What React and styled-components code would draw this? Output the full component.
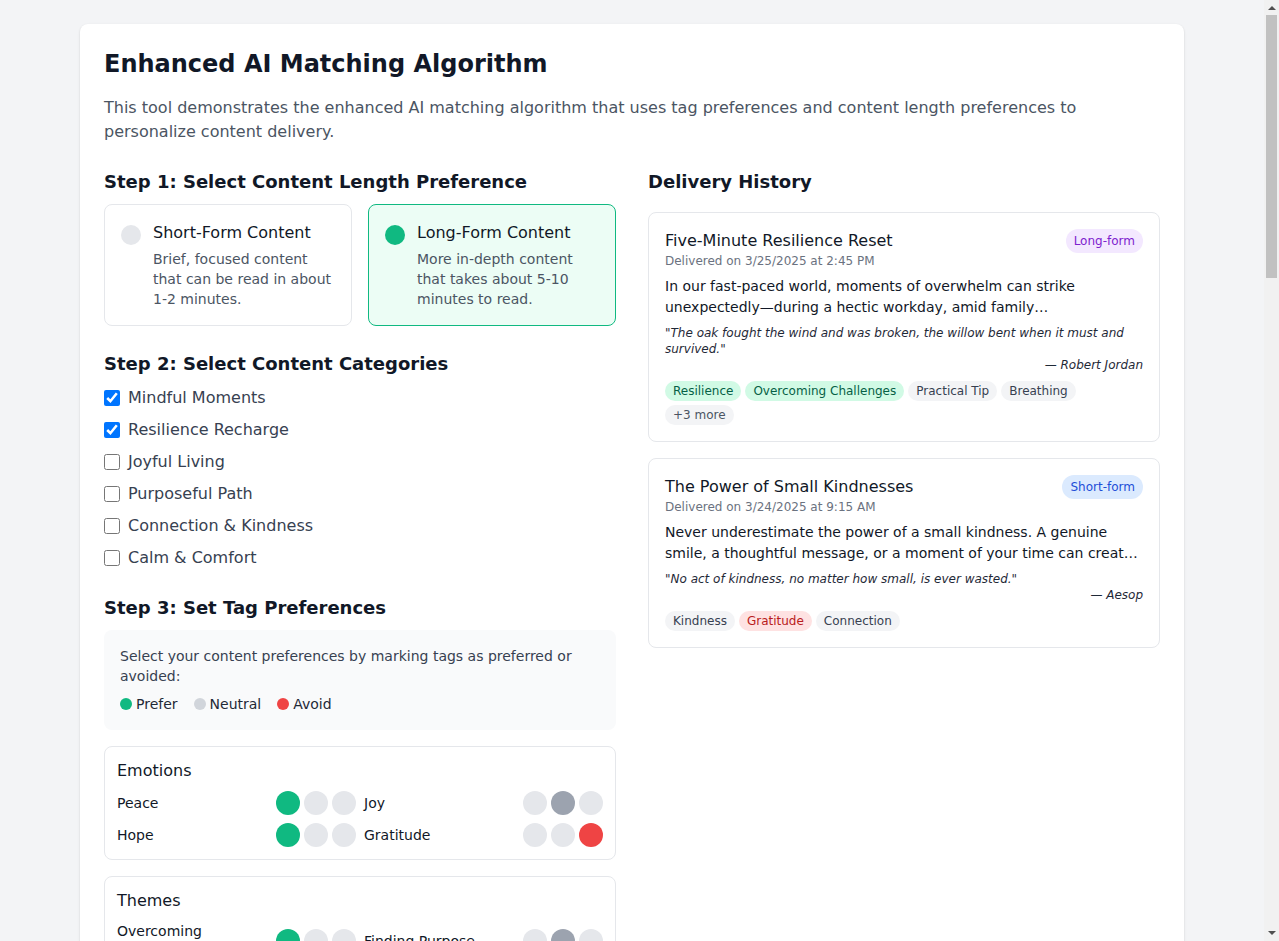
import React, { useState } from "react";
import styled, { createGlobalStyle } from "styled-components";

const GlobalStyle = createGlobalStyle`
  html, body { margin: 0; padding: 0; }
  body {
    background: #f3f4f6;
    font-family: "DejaVu Sans", "Noto Sans", sans-serif;
    color: #111827;
    padding-right: 15px;
  }
  * { box-sizing: border-box; }
`;

const ScrollRail = styled.div`
  position: fixed;
  top: 0;
  right: 0;
  width: 15px;
  height: 100vh;
  background: #f1f1f1;
  display: flex;
  flex-direction: column;
  justify-content: space-between;
  align-items: center;
`;

const RailTop = styled.div`
  display: flex;
  flex-direction: column;
  align-items: center;
`;

const RailArrow = styled.div`
  height: 15px;
  width: 15px;
  display: flex;
  align-items: center;
  justify-content: center;
`;

const RailThumb = styled.div`
  width: 11px;
  height: 263px;
  background: #c1c1c1;
`;

const Page = styled.div`
  max-width: 1152px;
  margin: 0 auto;
  padding: 24px;
`;

const Panel = styled.div`
  background: #fff;
  border-radius: 8px;
  box-shadow: 0 1px 3px rgba(0,0,0,0.1), 0 1px 2px rgba(0,0,0,0.06);
  padding: 24px;
`;

const Title = styled.h1`
  font-size: 24px;
  line-height: 32px;
  font-weight: 700;
  margin: 0 0 16px;
  color: #111827;
`;

const Intro = styled.p`
  font-size: 16px;
  line-height: 24px;
  color: #4b5563;
  margin: 0 0 24px;
`;

const Columns = styled.div`
  display: grid;
  grid-template-columns: 1fr 1fr;
  gap: 32px;
  align-items: start;
`;

const Section = styled.section`
  margin-bottom: 24px;
`;

const StepHeading = styled.h2`
  font-size: 18px;
  line-height: 28px;
  font-weight: 600;
  margin: 0 0 ${p => (p.$mb ? p.$mb : 8)}px;
  color: #111827;
`;

const OptionGrid = styled.div`
  display: grid;
  grid-template-columns: 1fr 1fr;
  gap: 16px;
`;

const OptionCard = styled.div`
  display: flex;
  align-items: flex-start;
  border: 1px solid ${p => (p.$active ? "#10b981" : "#e5e7eb")};
  background: ${p => (p.$active ? "#ecfdf5" : "#fff")};
  border-radius: 8px;
  padding: 16px;
  cursor: pointer;
`;

const Radio = styled.span`
  flex: none;
  width: 20px;
  height: 20px;
  border-radius: 50%;
  margin-top: 4px;
  margin-right: 12px;
  background: ${p => (p.$active ? "#10b981" : "#e5e7eb")};
`;

const OptionTitle = styled.div`
  font-size: 16px;
  line-height: 24px;
  font-weight: 500;
  color: #111827;
`;

const OptionDesc = styled.div`
  font-size: 14px;
  line-height: 20px;
  color: #4b5563;
  margin-top: 4px;
`;

const CheckList = styled.div`
  display: flex;
  flex-direction: column;
  gap: 8px;
`;

const CheckRow = styled.label`
  display: flex;
  align-items: center;
  font-size: 16px;
  line-height: 24px;
  color: #374151;
  cursor: pointer;
`;

const CheckBox = styled.input`
  width: 16px;
  height: 16px;
  margin: 0 8px 0 0;
`;

const InfoBox = styled.div`
  background: #f9fafb;
  border-radius: 8px;
  padding: 16px;
  margin-bottom: 16px;
`;

const InfoText = styled.p`
  font-size: 14px;
  line-height: 20px;
  color: #374151;
  margin: 0;
`;

const Legend = styled.div`
  display: flex;
  gap: 16px;
  margin-top: 8px;
  font-size: 14px;
  line-height: 20px;
  color: #1f2937;
`;

const LegendItem = styled.span`
  display: flex;
  align-items: center;
  gap: 4px;
`;

const Dot = styled.span`
  width: 12px;
  height: 12px;
  border-radius: 50%;
  background: ${p => p.$color};
`;

const TagGroup = styled.div`
  border: 1px solid #e5e7eb;
  border-radius: 8px;
  padding: 12px;
  margin-bottom: 16px;
`;

const GroupTitle = styled.div`
  font-size: 16px;
  line-height: 24px;
  font-weight: 500;
  margin-bottom: 8px;
  color: #111827;
`;

const TagGrid = styled.div`
  display: grid;
  grid-template-columns: 1fr 1fr;
  gap: 8px;
`;

const TagRow = styled.div`
  display: flex;
  align-items: center;
  justify-content: space-between;
  min-height: 24px;
`;

const TagName = styled.span`
  font-size: 14px;
  line-height: 20px;
  color: #111827;
  padding-right: 8px;
`;

const Toggles = styled.div`
  display: flex;
  gap: 4px;
  flex: none;
`;

const ToggleBtn = styled.button`
  width: 24px;
  height: 24px;
  border-radius: 50%;
  border: none;
  padding: 0;
  cursor: pointer;
  background: ${p => p.$bg};
`;

const PrimaryButton = styled.button`
  width: 100%;
  padding: 12px 16px;
  border: none;
  border-radius: 8px;
  background: #2563eb;
  color: #fff;
  font-family: inherit;
  font-size: 16px;
  line-height: 24px;
  font-weight: 500;
  cursor: pointer;
  margin-bottom: 24px;
`;

const HistoryCard = styled.div`
  border: 1px solid #e5e7eb;
  border-radius: 8px;
  padding: 16px;
  margin-bottom: 16px;
`;

const CardHead = styled.div`
  display: flex;
  justify-content: space-between;
  align-items: flex-start;
  margin-bottom: 7px;
`;

const CardTitle = styled.div`
  font-size: 16px;
  line-height: 24px;
  font-weight: 500;
  color: #111827;
`;

const CardDate = styled.div`
  font-size: 12px;
  line-height: 16px;
  color: #6b7280;
`;

const Badge = styled.span`
  flex: none;
  font-size: 12px;
  line-height: 16px;
  padding: 4px 8px;
  border-radius: 9999px;
  background: ${p => (p.$long ? "#f3e8ff" : "#dbeafe")};
  color: ${p => (p.$long ? "#7e22ce" : "#1d4ed8")};
`;

const Excerpt = styled.p`
  font-size: 14px;
  line-height: 21px;
  color: #111827;
  margin: 0 0 7px;
  display: -webkit-box;
  -webkit-line-clamp: 2;
  -webkit-box-orient: vertical;
  overflow: hidden;
`;

const Quote = styled.p`
  font-size: 12px;
  line-height: 16px;
  font-style: italic;
  color: #1f2937;
  margin: 0;
`;

const Author = styled.p`
  font-size: 12px;
  line-height: 16px;
  font-style: italic;
  color: #1f2937;
  text-align: right;
  margin: 0 0 8px;
`;

const Pills = styled.div`
  display: flex;
  flex-wrap: wrap;
  gap: 4px;
`;

const tone = {
  prefer: ["#d1fae5", "#065f46"],
  avoid: ["#fee2e2", "#b91c1c"],
  neutral: ["#f3f4f6", "#374151"],
  more: ["#f3f4f6", "#4b5563"],
};

const Pill = styled.span`
  font-size: 12px;
  line-height: 16px;
  padding: 2px 8px;
  border-radius: 9999px;
  background: ${p => tone[p.$tone][0]};
  color: ${p => tone[p.$tone][1]};
`;

const ResultCard = styled.div`
  border: 1px solid #e5e7eb;
  border-radius: 8px;
  padding: 16px;
  margin-bottom: 16px;
`;

const ScoreRow = styled.div`
  display: flex;
  align-items: center;
  gap: 8px;
  margin: 8px 0;
  font-size: 12px;
  line-height: 16px;
  color: #4b5563;
`;

const ScoreTrack = styled.div`
  flex: 1;
  height: 8px;
  border-radius: 9999px;
  background: #e5e7eb;
  overflow: hidden;
`;

const ScoreFill = styled.div`
  height: 100%;
  background: #10b981;
  border-radius: 9999px;
`;

const Breakdown = styled.ul`
  margin: 8px 0 0;
  padding-left: 18px;
  font-size: 12px;
  line-height: 18px;
  color: #4b5563;
`;

const tagGroups = [
  {
    name: "Emotions",
    tags: [["Peace", 0], ["Joy", 1], ["Hope", 0], ["Gratitude", 2]],
  },
  {
    name: "Themes",
    tags: [
      ["Overcoming Challenges", 0], ["Finding Purpose", 1],
      ["Resilience", 0], ["Self-Compassion", 1],
      ["Relationships", 1], ["Personal Growth", 0],
    ],
  },
  {
    name: "Practices",
    tags: [
      ["Breathing", 1], ["Meditation", 0],
      ["Journaling", 1], ["Movement", 2],
      ["Practical Tip", 1], ["Reflection", 0],
    ],
  },
  {
    name: "Values",
    tags: [["Kindness", 1], ["Connection", 1], ["Courage", 0], ["Patience", 1]],
  },
];

const colorsFor = ["#10b981", "#9ca3af", "#ef4444"];

function TagPrefRow({ name, initial }) {
  const [v, setV] = useState(initial);
  return (
    <TagRow>
      <TagName>{name}</TagName>
      <Toggles>
        {[0, 1, 2].map(i => (
          <ToggleBtn
            key={i}
            aria-label={["Prefer", "Neutral", "Avoid"][i]}
            $bg={v === i ? colorsFor[i] : "#e5e7eb"}
            onClick={() => setV(i)}
          />
        ))}
      </Toggles>
    </TagRow>
  );
}

const categories = [
  ["Mindful Moments", true],
  ["Resilience Recharge", true],
  ["Joyful Living", false],
  ["Purposeful Path", false],
  ["Connection & Kindness", false],
  ["Calm & Comfort", false],
];

const history = [
  {
    title: "Five-Minute Resilience Reset",
    date: "Delivered on 3/25/2025 at 2:45 PM",
    long: true,
    text: "In our fast-paced world, moments of overwhelm can strike unexpectedly—during a hectic workday, amid family responsibilities, or in the quiet hours when worries grow louder.",
    quote: "\"The oak fought the wind and was broken, the willow bent when it must and survived.\"",
    author: "— Robert Jordan",
    tags: [["Resilience", "prefer"], ["Overcoming Challenges", "prefer"], ["Practical Tip", "neutral"], ["Breathing", "neutral"], ["+3 more", "more"]],
  },
  {
    title: "The Power of Small Kindnesses",
    date: "Delivered on 3/24/2025 at 9:15 AM",
    long: false,
    text: "Never underestimate the power of a small kindness. A genuine smile, a thoughtful message, or a moment of your time can create ripples that reach far beyond what you see.",
    quote: "\"No act of kindness, no matter how small, is ever wasted.\"",
    author: "— Aesop",
    tags: [["Kindness", "neutral"], ["Gratitude", "avoid"], ["Connection", "neutral"]],
  },
];

const results = [
  ["Breathing Through the Storm", 92, true, ["Resilience", "Peace", "Breathing"]],
  ["Finding Hope in Hard Seasons", 88, true, ["Hope", "Overcoming Challenges"]],
  ["A Mindful Morning Minute", 81, false, ["Peace", "Meditation"]],
  ["Bending, Not Breaking", 77, true, ["Resilience", "Personal Growth"]],
  ["Quiet Reflections at Dusk", 70, true, ["Reflection", "Peace"]],
  ["Small Steps Forward", 64, false, ["Overcoming Challenges", "Practical Tip"]],
  ["The Courage to Begin Again", 58, true, ["Courage", "Hope"]],
  ["Rest as a Practice", 51, false, ["Calm", "Self-Compassion"]],
];

function FakeScrollbar() {
  return (
    <ScrollRail aria-hidden="true">
      <RailTop>
        <RailArrow>
          <svg width="8" height="5" viewBox="0 0 8 5"><path d="M0 5 L4 1 L8 5 Z" fill="#505050" /></svg>
        </RailArrow>
        <RailThumb />
      </RailTop>
      <RailArrow>
        <svg width="8" height="5" viewBox="0 0 8 5"><path d="M0 0 L8 0 L4 4 Z" fill="#505050" /></svg>
      </RailArrow>
    </ScrollRail>
  );
}

export default function App() {
  const [len, setLen] = useState("long");
  const [cats, setCats] = useState(categories.map(c => c[1]));
  return (
    <>
      <GlobalStyle />
      <Page>
        <Panel>
          <Title>Enhanced AI Matching Algorithm</Title>
          <Intro>
            This tool demonstrates the enhanced AI matching algorithm that uses tag preferences and content length preferences to personalize content delivery.
          </Intro>
          <Columns>
            <div>
              <Section>
                <StepHeading>Step 1: Select Content Length Preference</StepHeading>
                <OptionGrid>
                  <OptionCard $active={len === "short"} onClick={() => setLen("short")}>
                    <Radio $active={len === "short"} />
                    <div>
                      <OptionTitle>Short-Form Content</OptionTitle>
                      <OptionDesc>Brief, focused content that can be read in about 1-2 minutes.</OptionDesc>
                    </div>
                  </OptionCard>
                  <OptionCard $active={len === "long"} onClick={() => setLen("long")}>
                    <Radio $active={len === "long"} />
                    <div>
                      <OptionTitle>Long-Form Content</OptionTitle>
                      <OptionDesc>More in-depth content that takes about 5-10 minutes to read.</OptionDesc>
                    </div>
                  </OptionCard>
                </OptionGrid>
              </Section>

              <Section>
                <StepHeading>Step 2: Select Content Categories</StepHeading>
                <CheckList>
                  {categories.map((c, i) => (
                    <CheckRow key={c[0]}>
                      <CheckBox
                        type="checkbox"
                        checked={cats[i]}
                        onChange={() => setCats(cats.map((x, j) => (j === i ? !x : x)))}
                      />
                      {c[0]}
                    </CheckRow>
                  ))}
                </CheckList>
              </Section>

              <Section>
                <StepHeading>Step 3: Set Tag Preferences</StepHeading>
                <InfoBox>
                  <InfoText>Select your content preferences by marking tags as preferred or avoided:</InfoText>
                  <Legend>
                    <LegendItem><Dot $color="#10b981" />Prefer</LegendItem>
                    <LegendItem><Dot $color="#d1d5db" />Neutral</LegendItem>
                    <LegendItem><Dot $color="#ef4444" />Avoid</LegendItem>
                  </Legend>
                </InfoBox>
                {tagGroups.map(g => (
                  <TagGroup key={g.name}>
                    <GroupTitle>{g.name}</GroupTitle>
                    <TagGrid>
                      {g.tags.map(t => (
                        <TagPrefRow key={t[0]} name={t[0]} initial={t[1]} />
                      ))}
                    </TagGrid>
                  </TagGroup>
                ))}
              </Section>

              <PrimaryButton>Find Matching Content</PrimaryButton>

              <Section>
                <StepHeading $mb={16}>Step 4: Matching Results</StepHeading>
                {results.map(r => (
                  <ResultCard key={r[0]}>
                    <CardHead>
                      <CardTitle>{r[0]}</CardTitle>
                      <Badge $long={r[2]}>{r[2] ? "Long-form" : "Short-form"}</Badge>
                    </CardHead>
                    <ScoreRow>
                      <span>Match score</span>
                      <ScoreTrack><ScoreFill style={{ width: `${r[1]}%` }} /></ScoreTrack>
                      <span>{r[1]}%</span>
                    </ScoreRow>
                    <Pills>
                      {r[3].map(t => <Pill key={t} $tone="prefer">{t}</Pill>)}
                    </Pills>
                    <Breakdown>
                      <li>Category match: +30</li>
                      <li>Preferred tags: +{Math.round(r[1] / 2)}</li>
                      <li>Length preference: {r[2] ? "+15" : "+0"}</li>
                    </Breakdown>
                  </ResultCard>
                ))}
              </Section>
            </div>

            <div>
              <StepHeading $mb={16}>Delivery History</StepHeading>
              {history.map(h => (
                <HistoryCard key={h.title}>
                  <CardHead>
                    <div>
                      <CardTitle>{h.title}</CardTitle>
                      <CardDate>{h.date}</CardDate>
                    </div>
                    <Badge $long={h.long}>{h.long ? "Long-form" : "Short-form"}</Badge>
                  </CardHead>
                  <Excerpt>{h.text}</Excerpt>
                  <Quote>{h.quote}</Quote>
                  <Author>{h.author}</Author>
                  <Pills>
                    {h.tags.map(t => <Pill key={t[0]} $tone={t[1]}>{t[0]}</Pill>)}
                  </Pills>
                </HistoryCard>
              ))}
            </div>
          </Columns>
        </Panel>
      </Page>
      <FakeScrollbar />
    </>
  );
}
